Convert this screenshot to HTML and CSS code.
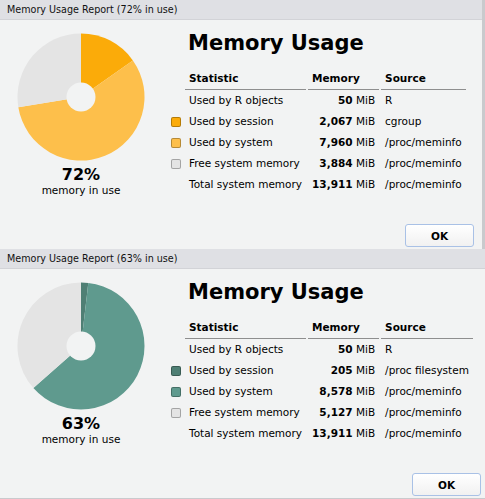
FILE: index.html
```html
<!DOCTYPE html>
<html lang="en">

<head>
    <meta charset="UTF-8">
    <meta name="viewport" content="width=device-width, initial-scale=1.0">
    <title>Memory Usage Report</title>
    <link rel="stylesheet" href="styles.css">
</head>

<body>
    <!-- dialog 1: cgroup -->
    <div class="dialog">
        <div class="title-bar">Memory Usage Report (72% in use)</div>
        <div class="dialog-body">
            <div class="chart-col">
                <svg class="pie" width="128" height="128" viewBox="0 0 128 128">
                    <path d="M64,64 L64,0.5 A63.5,63.5 0 0 1 115.89,27.40 Z" fill="#fbab09" />
                    <path d="M64,64 L115.89,27.40 A63.5,63.5 0 1 1 1.32,74.15 Z" fill="#fdbf4b" />
                    <path d="M64,64 L1.32,74.15 A63.5,63.5 0 0 1 64,0.5 Z" fill="#e4e4e4" />
                    <circle cx="64" cy="64" r="14.5" fill="#f2f3f3" />
                </svg>
                <div class="pct">72%</div>
                <div class="pct-label">memory in use</div>
            </div>
            <div class="info-col">
                <h1>Memory Usage</h1>
                <table class="stats">
                    <tr>
                        <th class="swatch-cell"></th>
                        <th>Statistic</th>
                        <th>Memory</th>
                        <th>Source</th>
                    </tr>
                    <tr>
                        <td class="swatch-cell"></td>
                        <td>Used by R objects</td>
                        <td class="mem"><b>50</b> MiB</td>
                        <td>R</td>
                    </tr>
                    <tr>
                        <td class="swatch-cell"><span class="swatch orange-dark"></span></td>
                        <td>Used by session</td>
                        <td class="mem"><b>2,067</b> MiB</td>
                        <td>cgroup</td>
                    </tr>
                    <tr>
                        <td class="swatch-cell"><span class="swatch orange-light"></span></td>
                        <td>Used by system</td>
                        <td class="mem"><b>7,960</b> MiB</td>
                        <td>/proc/meminfo</td>
                    </tr>
                    <tr>
                        <td class="swatch-cell"><span class="swatch free"></span></td>
                        <td>Free system memory</td>
                        <td class="mem"><b>3,884</b> MiB</td>
                        <td>/proc/meminfo</td>
                    </tr>
                    <tr>
                        <td class="swatch-cell"></td>
                        <td>Total system memory</td>
                        <td class="mem"><b>13,911</b> MiB</td>
                        <td>/proc/meminfo</td>
                    </tr>
                </table>
                <button class="ok-btn">OK</button>
            </div>
        </div>
    </div>

    <!-- dialog 2: /proc filesystem -->
    <div class="dialog dialog-wide">
        <div class="title-bar">Memory Usage Report (63% in use)</div>
        <div class="dialog-body">
            <div class="chart-col">
                <svg class="pie" width="128" height="128" viewBox="0 0 128 128">
                    <path d="M64,64 L64,0.5 A63.5,63.5 0 0 1 71.30,0.92 Z" fill="#4f7f74" />
                    <path d="M64,64 L71.30,0.92 A63.5,63.5 0 1 1 16.37,105.99 Z" fill="#5f9a8e" />
                    <path d="M64,64 L16.37,105.99 A63.5,63.5 0 0 1 64,0.5 Z" fill="#e4e4e4" />
                    <circle cx="64" cy="64" r="14.5" fill="#f2f3f3" />
                </svg>
                <div class="pct">63%</div>
                <div class="pct-label">memory in use</div>
            </div>
            <div class="info-col">
                <h1>Memory Usage</h1>
                <table class="stats">
                    <tr>
                        <th class="swatch-cell"></th>
                        <th>Statistic</th>
                        <th>Memory</th>
                        <th>Source</th>
                    </tr>
                    <tr>
                        <td class="swatch-cell"></td>
                        <td>Used by R objects</td>
                        <td class="mem"><b>50</b> MiB</td>
                        <td>R</td>
                    </tr>
                    <tr>
                        <td class="swatch-cell"><span class="swatch teal-dark"></span></td>
                        <td>Used by session</td>
                        <td class="mem"><b>205</b> MiB</td>
                        <td>/proc filesystem</td>
                    </tr>
                    <tr>
                        <td class="swatch-cell"><span class="swatch teal-light"></span></td>
                        <td>Used by system</td>
                        <td class="mem"><b>8,578</b> MiB</td>
                        <td>/proc/meminfo</td>
                    </tr>
                    <tr>
                        <td class="swatch-cell"><span class="swatch free"></span></td>
                        <td>Free system memory</td>
                        <td class="mem"><b>5,127</b> MiB</td>
                        <td>/proc/meminfo</td>
                    </tr>
                    <tr>
                        <td class="swatch-cell"></td>
                        <td>Total system memory</td>
                        <td class="mem"><b>13,911</b> MiB</td>
                        <td>/proc/meminfo</td>
                    </tr>
                </table>
                <button class="ok-btn">OK</button>
            </div>
        </div>
    </div>
</body>

</html>
```

FILE: styles.css
```css
html,
body {
    margin: 0;
    padding: 0;
    overflow: hidden;
}

body {
    font-family: "DejaVu Sans", Verdana, sans-serif;
    background-color: #c9cacd;
    color: #000;
}

.dialog {
    width: 482px;
    background-color: #f2f3f3;
}

.dialog-wide {
    width: 485px;
}

.title-bar {
    height: 19px;
    line-height: 19px;
    padding-left: 7px;
    font-size: 9.6px;
    color: #111;
    background-color: #dfe0e4;
    border-bottom: 1px solid #d2d3d7;
}

.dialog-body {
    display: flex;
    height: 229px;
}

/* pie chart column */
.chart-col {
    width: 128px;
    margin-left: 17px;
    padding-top: 13px;
    text-align: center;
}

.pie {
    display: block;
}

.pct {
    margin-top: 5px;
    font-size: 16px;
    font-weight: bold;
    line-height: 18px;
}

.pct-label {
    font-size: 10.5px;
    line-height: 13px;
}

/* table column */
.info-col {
    flex: 1;
    display: flex;
    flex-direction: column;
    margin-left: 23px;
}

h1 {
    margin: 11px 0 12px 20px;
    font-size: 21px;
    line-height: 25px;
}

.stats {
    align-self: flex-start;
    border-collapse: separate;
    border-spacing: 2px 0;
    font-size: 10.5px;
    line-height: 13px;
}

.stats th,
.stats td {
    padding: 4px;
    text-align: left;
    white-space: nowrap;
}

.stats th {
    border-bottom: 1px solid #8e8e8e;
}

.stats .swatch-cell {
    width: 10px;
    padding: 0 2px 0 1px;
    border-bottom: none;
    vertical-align: middle;
}

.stats td.mem {
    text-align: right;
}

.swatch {
    display: block;
    width: 8px;
    height: 8px;
    border: 1px solid rgba(0, 0, 0, 0.28);
    border-radius: 2px;
}

.orange-dark {
    background-color: #fbab09;
}

.orange-light {
    background-color: #fdbf4b;
}

.teal-dark {
    background-color: #4f7f74;
}

.teal-light {
    background-color: #5f9a8e;
}

.free {
    background-color: #e4e4e4;
}

.ok-btn {
    align-self: flex-end;
    margin: auto 8px 2px 0;
    width: 69px;
    height: 23px;
    padding: 0;
    font-family: inherit;
    font-size: 10.5px;
    font-weight: bold;
    color: #000;
    background: linear-gradient(#ffffff, #f1f1f1);
    border: 1px solid #a9c1e6;
    border-radius: 3px;
}

.dialog-wide .ok-btn {
    margin-right: 4px;
}
```
